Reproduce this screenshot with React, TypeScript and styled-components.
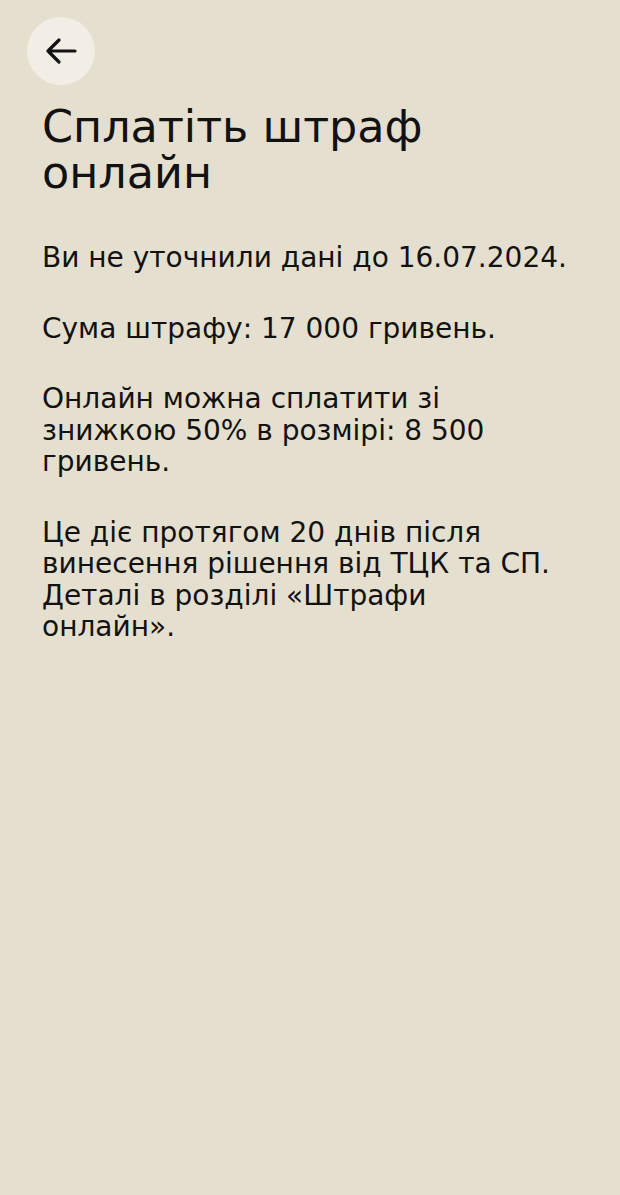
import React from "react";
import styled, { createGlobalStyle } from "styled-components";

const GlobalStyle = createGlobalStyle`
  html, body {
    margin: 0;
    padding: 0;
    background: #e5dfcf;
  }
  body {
    font-family: "DejaVu Sans", "Liberation Sans", sans-serif;
    color: #121212;
    -webkit-font-smoothing: antialiased;
  }
`;

const Screen = styled.div`
  width: 620px;
  min-height: 1195px;
  box-sizing: border-box;
  background: #e5dfcf;
  padding: 17px 44px 0 42px;
  display: flex;
  flex-direction: column;
`;

const BackButton = styled.button`
  width: 68px;
  height: 68px;
  margin-left: -15px;
  border: none;
  border-radius: 50%;
  background: #f2eee5;
  display: flex;
  align-items: center;
  justify-content: center;
  padding: 0;
  cursor: pointer;
`;

const Title = styled.h1`
  margin: 19px 0 0;
  font-size: 44.5px;
  line-height: 46px;
  font-weight: 400;
`;

const Body = styled.div`
  margin-top: 46px;
  display: flex;
  flex-direction: column;
  gap: 39px;
`;

const Paragraph = styled.p`
  margin: 0;
  font-size: 28px;
  line-height: 31.5px;
  font-weight: 400;
  white-space: pre-line;
`;

const paragraphs = [
  "Ви не уточнили дані до 16.07.2024.",
  "Сума штрафу: 17 000 гривень.",
  "Онлайн можна сплатити зі знижкою 50% в розмірі: 8 500 гривень.",
  "Це діє протягом 20 днів після винесення рішення від ТЦК та СП. Деталі в розділі «Штрафи\nонлайн».",
];

const ArrowIcon = () => (
  <svg width="32" height="28" viewBox="0 0 32 28" fill="none">
    <path
      d="M30 14H3M14 3L3 14l11 11"
      stroke="#121212"
      strokeWidth="3.2"
      strokeLinecap="round"
      strokeLinejoin="round"
    />
  </svg>
);

export default function App() {
  return (
    <>
      <GlobalStyle />
      <Screen>
        <BackButton aria-label="Назад">
          <ArrowIcon />
        </BackButton>
        <Title>
          Сплатіть штраф
          <br />
          онлайн
        </Title>
        <Body>
          {paragraphs.map((text, i) => (
            <Paragraph key={i}>{text}</Paragraph>
          ))}
        </Body>
      </Screen>
    </>
  );
}
